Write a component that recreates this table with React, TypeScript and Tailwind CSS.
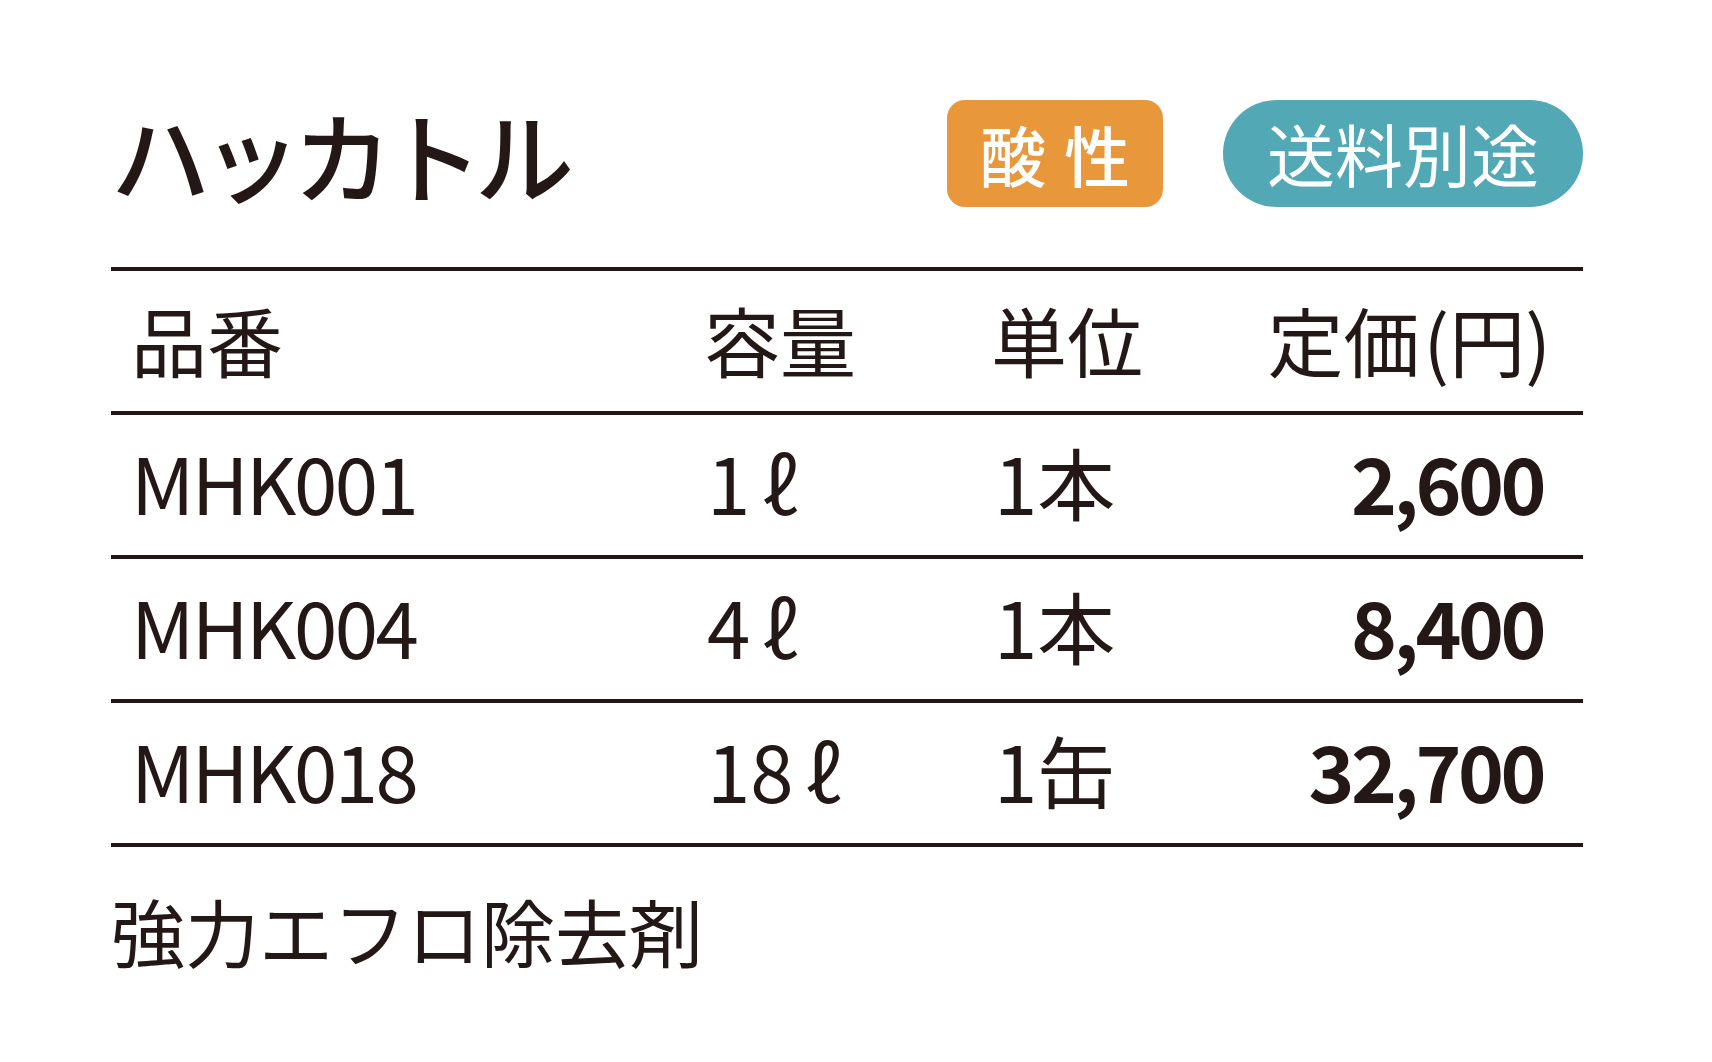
const rows = [
  { code: "MHK001", vol: "1", unit: "1本", price: "2,600" },
  { code: "MHK004", vol: "4", unit: "1本", price: "8,400" },
  { code: "MHK018", vol: "18", unit: "1缶", price: "32,700" },
];

const font = { fontFamily: '"Noto Sans CJK JP", "Noto Sans", sans-serif' };

export default function App() {
  return (
    <div className="min-h-screen bg-white text-[#231815]" style={font}>
      <div className="w-[1583px] pl-[111px] pt-[98px]">
        {/* title + badges */}
        <div className="flex h-[110px] items-center">
          <h1 className="text-[99px] leading-none font-medium tracking-[-8px]">ハッカトル</h1>
          <div className="ml-auto flex items-center gap-[60px]">
            <span className="flex h-[107px] w-[216px] items-center justify-center rounded-[18px] bg-[#E8973A] text-[66px] leading-none font-medium text-white">
              酸<span className="w-[18px]" />性
            </span>
            <span className="flex h-[107px] w-[360px] items-center justify-center rounded-full bg-[#52A8B5] text-[68px] leading-none text-white">
              送料別途
            </span>
          </div>
        </div>

        {/* table */}
        <div className="mt-[59px] border-t-4 border-[#231815]">
          <div className="flex h-[144px] items-center border-b-4 border-[#231815] pb-[4px] text-[76px] leading-none">
            <div className="w-[593px] pl-[20px]">品番</div>
            <div className="w-[287px]">容量</div>
            <div className="w-[250px]">単位</div>
            <div className="flex-1 pr-[32px] text-right">
              定価<span className="ml-[4px]">(</span>円)
            </div>
          </div>
          {rows.map((r) => (
            <div
              key={r.code}
              className="flex h-[144px] items-center border-b-4 border-[#231815] pb-[9px] text-[78px] leading-none"
            >
              <div className="w-[593px] pl-[20px] tracking-[-2.5px]">{r.code}</div>
              <div className="w-[287px] pl-[3px]">
                {r.vol}
                <span className="ml-[12px]">ℓ</span>
              </div>
              <div className="w-[250px] pl-[3px]">{r.unit}</div>
              <div className="flex-1 pr-[40px] text-right font-bold tracking-[-3.5px]">{r.price}</div>
            </div>
          ))}
        </div>

        <p className="mt-[46px] text-[74px] leading-none">強力エフロ除去剤</p>
      </div>
    </div>
  );
}
